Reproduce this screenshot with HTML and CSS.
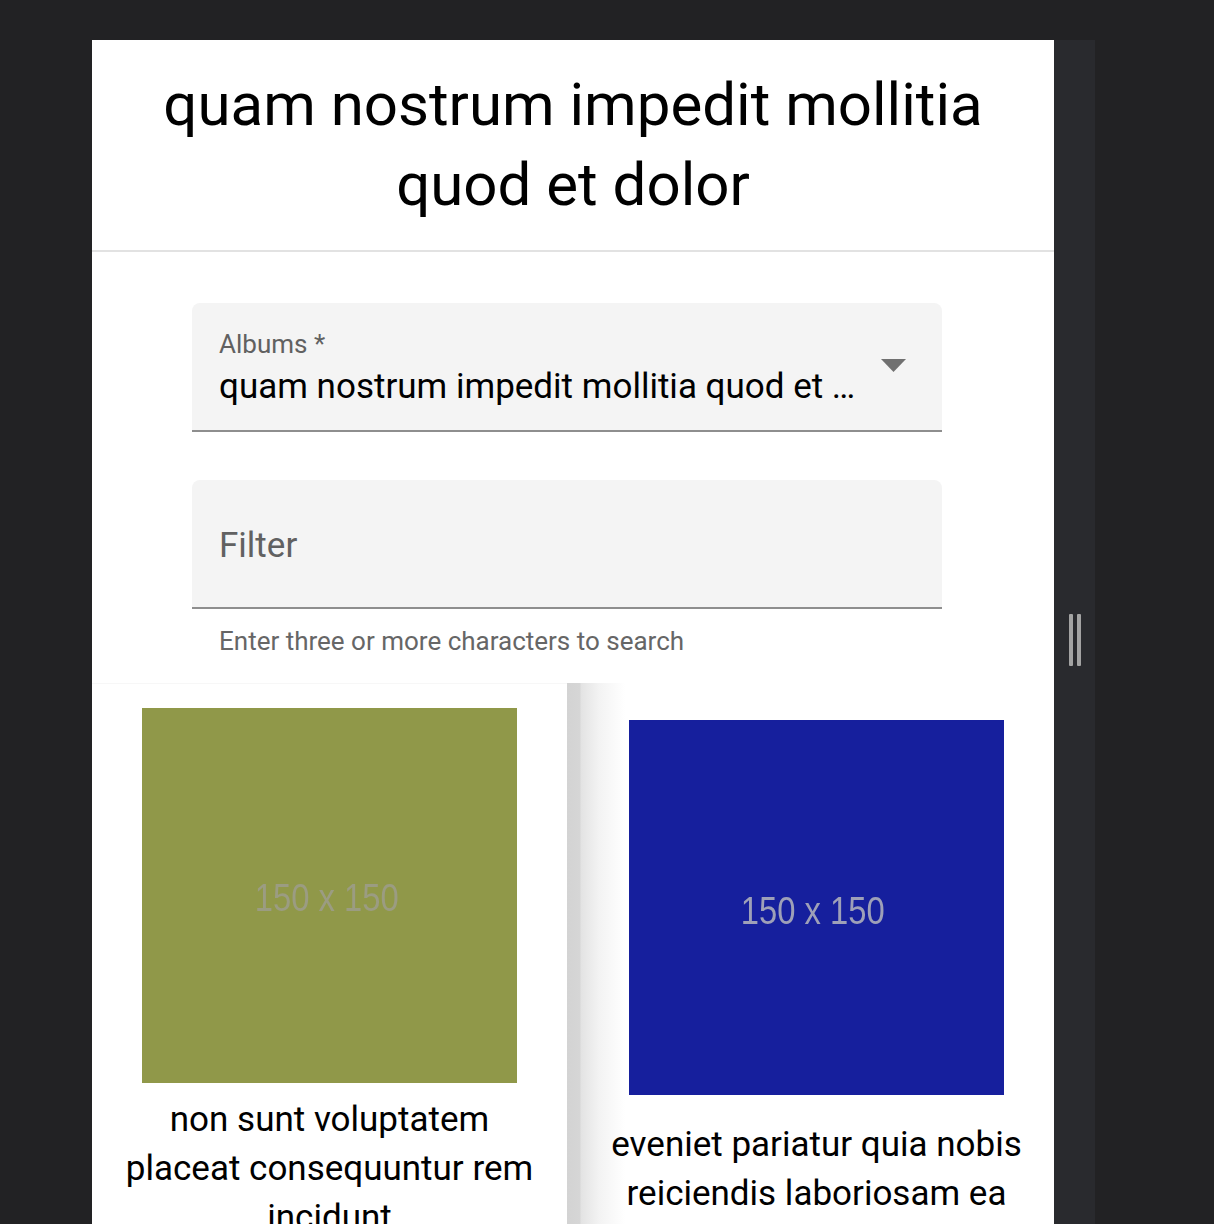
FILE: index.html
```html
<!DOCTYPE html>
<html lang="en">
<head>
<meta charset="utf-8">
<title>Albums</title>
<link rel="stylesheet" href="styles.css">
</head>
<body>
<div class="frame">
  <main class="panel">
    <header class="header">
      <h1 class="title">quam nostrum impedit mollitia quod et dolor</h1>
    </header>
    <section class="form">
      <div class="field select">
        <div class="select-text">
          <div class="label">Albums *</div>
          <div class="value">quam nostrum impedit mollitia quod et …</div>
        </div>
        <svg class="arrow" width="25" height="13" viewBox="0 0 25 13"><path d="M0 0 L25 0 L12.5 13 Z" fill="#707070"/></svg>
      </div>
      <div class="field filter">
        <div class="placeholder">Filter</div>
      </div>
      <div class="hint">Enter three or more characters to search</div>
    </section>
    <section class="grid">
      <article class="card card-left">
        <div class="thumb olive"><span class="thumb-text">150 x 150</span></div>
        <p class="caption">non sunt voluptatem placeat consequuntur rem incidunt</p>
      </article>
      <article class="card card-right">
        <div class="thumb blue"><span class="thumb-text">150 x 150</span></div>
        <p class="caption">eveniet pariatur quia nobis reiciendis laboriosam ea</p>
      </article>
    </section>
  </main>
  <aside class="rail">
    <div class="handle"><span class="bar"></span><span class="bar"></span></div>
  </aside>
</div>
</body>
</html>
```

FILE: styles.css
```css
html, body {
  margin: 0;
  padding: 0;
  background: #222224;
  height: 100%;
  overflow: hidden;
}
body {
  font-family: Roboto, "Liberation Sans", Arial, sans-serif;
  color: #000;
}
.frame {
  display: flex;
  margin-top: 40px;
  margin-left: 92px;
  height: 1184px;
}
.panel {
  width: 962px;
  background: #fff;
  overflow: hidden;
}
.rail {
  width: 41px;
  background: #292a2e;
  display: flex;
  justify-content: center;
  padding-top: 574px;
  box-sizing: border-box;
}
.handle {
  display: flex;
  gap: 4px;
  height: 52px;
}
.bar {
  width: 4px;
  height: 52px;
  background: #a3a3a3;
  border-radius: 1px;
}
.header {
  padding: 25px 20px 25px;
  border-bottom: 2px solid #e2e2e2;
}
.title {
  margin: 0;
  font-size: 60px;
  font-weight: 400;
  line-height: 80px;
  text-align: center;
  padding: 0 40px;
}
.form {
  padding: 51px 112px 0 100px;
}
.field {
  background: #f4f4f4;
  border-radius: 8px 8px 0 0;
  border-bottom: 2px solid #8e8e8e;
  box-sizing: border-box;
  width: 750px;
  height: 129px;
  padding-left: 27px;
}
.select {
  display: flex;
  padding-top: 26px;
}
.select-text {
  flex: 1;
}
.label {
  font-size: 26px;
  line-height: 30px;
  color: #616161;
}
.value {
  font-size: 35px;
  line-height: 40px;
  margin-top: 8px;
  white-space: nowrap;
}
.arrow {
  margin: 30px 36px 0 0;
}
.filter {
  margin-top: 48px;
  padding-top: 46px;
}
.placeholder {
  font-size: 35px;
  line-height: 40px;
  color: #616161;
}
.hint {
  font-size: 26px;
  line-height: 30px;
  color: #666;
  padding: 17px 0 0 27px;
}
.grid {
  display: grid;
  grid-template-columns: 475px 499px;
  margin-top: 27px;
  box-shadow: inset 0 1px 0 #f7f7f7;
}
.card {
  display: flex;
  flex-direction: column;
  align-items: center;
}
.card-left {
  padding-top: 25px;
}
.card-right {
  padding-top: 37px;
  background: linear-gradient(to right, #d3d3d3 0, #d6d6d6 13px, #e3e3e3 14px, #f3f3f3 32px, #fff 58px);
}
.thumb {
  width: 375px;
  height: 375px;
  display: flex;
  align-items: center;
  justify-content: center;
}
.olive { background: #909849; }
.blue { background: #161f9d; }
.thumb-text {
  font-family: "Liberation Sans", Arial, sans-serif;
  font-size: 39px;
  transform: scaleX(0.84);
  filter: blur(0.6px);
}
.olive .thumb-text { color: #9b9c82; margin: 4px 6px 0 0; }
.blue .thumb-text { color: #9ea0b8; margin: 6px 8px 0 0; }
.caption {
  margin: 0;
  font-size: 35px;
  line-height: 49px;
  text-align: center;
}
.card-left .caption { margin-top: 12px; padding: 0 30px; }
.card-right .caption { margin-top: 25px; padding: 0 30px; }
```
